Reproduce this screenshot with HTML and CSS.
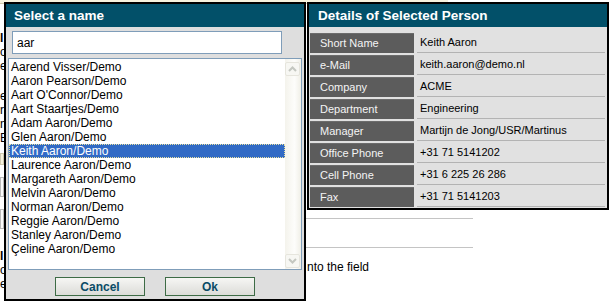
FILE: index.html
```html
<!DOCTYPE html>
<html lang="en">
<head>
    <meta charset="UTF-8">
    <title>Select a name</title>
    <link rel="stylesheet" href="styles.css">
</head>
<body>

    <div class="page">

        <!-- page behind the dialogs -->
        <div class="backdrop">
            <div class="strip"></div>
            <div class="backdrop-body">
                <div class="edge">
                    <p class="bold">l</p>
                    <p>o</p>
                    <p>e</p>
                    <p class="spacer">e</p>
                    <p>r</p>
                    <p>n</p>
                    <p>E</p>
                    <p class="box-beige"></p>
                    <p class="box-gray"></p>
                    <p class="box-gray"></p>
                    <p class="bold late">l</p>
                    <p>o</p>
                    <p>e</p>
                </div>
                <div class="notes">
                    <div class="rule first"></div>
                    <div class="rule"></div>
                    <p class="hint">nto the field</p>
                </div>
            </div>
        </div>

        <!-- name picker -->
        <div class="dialog picker">
            <div class="dialog-title">Select a name</div>
            <div class="picker-body">
                <input class="search" type="text" value="aar">
                <div class="listbox">
                    <ul class="names">
                        <li>Aarend Visser/Demo</li>
                        <li>Aaron Pearson/Demo</li>
                        <li>Aart O'Connor/Demo</li>
                        <li>Aart Staartjes/Demo</li>
                        <li>Adam Aaron/Demo</li>
                        <li>Glen Aaron/Demo</li>
                        <li class="selected">Keith Aaron/Demo</li>
                        <li>Laurence Aaron/Demo</li>
                        <li>Margareth Aaron/Demo</li>
                        <li>Melvin Aaron/Demo</li>
                        <li>Norman Aaron/Demo</li>
                        <li>Reggie Aaron/Demo</li>
                        <li>Stanley Aaron/Demo</li>
                        <li>Çeline Aaron/Demo</li>
                    </ul>
                    <div class="scrollbar">
                        <span class="scroll-btn">
                            <svg width="9" height="6" viewBox="0 0 9 6"><path d="M1 5 L4.5 1.5 L8 5" fill="none" stroke="#c4c7c0" stroke-width="2"/></svg>
                        </span>
                        <span class="scroll-btn">
                            <svg width="9" height="6" viewBox="0 0 9 6"><path d="M1 1 L4.5 4.5 L8 1" fill="none" stroke="#c4c7c0" stroke-width="2"/></svg>
                        </span>
                    </div>
                </div>
                <div class="buttons">
                    <button class="btn">Cancel</button>
                    <button class="btn">Ok</button>
                </div>
            </div>
        </div>

        <!-- details of the selected person -->
        <div class="dialog details">
            <div class="dialog-title">Details of Selected Person</div>
            <div class="details-body">
                <div class="label">Short Name</div><div class="value">Keith Aaron</div>
                <div class="label">e-Mail</div><div class="value">keith.aaron@demo.nl</div>
                <div class="label">Company</div><div class="value">ACME</div>
                <div class="label">Department</div><div class="value">Engineering</div>
                <div class="label">Manager</div><div class="value">Martijn de Jong/USR/Martinus</div>
                <div class="label">Office Phone</div><div class="value">+31 71 5141202</div>
                <div class="label">Cell Phone</div><div class="value">+31 6 225 26 286</div>
                <div class="label">Fax</div><div class="value">+31 71 5141203</div>
            </div>
        </div>

    </div>

</body>
</html>
```

FILE: styles.css
```css
body {
    margin: 0;
    background: #fff;
    font-family: "Liberation Sans", Arial, sans-serif;
    color: #000;
}

.page {
    position: relative;
    width: 609px;
    height: 301px;
    overflow: hidden;
}

/* ---------- page behind ---------- */

.strip {
    width: 448px;
    height: 3px;
    background: #f6f2de;
    border-bottom: 1px solid #cfc9ae;
}

.backdrop-body {
    display: flex;
}

.edge {
    width: 4px;
    padding-top: 27px;
    font-size: 12px;
}

.edge p {
    margin: 0;
    height: 14px;
    line-height: 14px;
    white-space: nowrap;
}

.edge .bold {
    font-weight: bold;
}

.edge .spacer {
    margin-top: 16px;
}

.edge .box-beige {
    margin-top: 8px;
    height: 10px;
    background: #f6f2de;
    border: 1px solid #cfc9ae;
}

.edge .box-gray {
    margin-top: 12px;
    height: 18px;
    border: 1px solid #b9b9b9;
    background: #fafafa;
}

.edge .late {
    margin-top: 20px;
}

.notes {
    margin-left: 302px;
    padding-top: 214px;
    width: 167px;
}

.rule {
    height: 1px;
    background: #c4c4c4;
    margin-bottom: 28px;
}

.hint {
    margin: -16px 0 0 1px;
    font-size: 12px;
    white-space: nowrap;
}

/* ---------- dialogs ---------- */

.dialog {
    position: absolute;
    top: 2px;
    box-sizing: border-box;
    width: 302px;
    border: 2px solid #000;
    background: #dedede;
}

.picker {
    left: 4px;
    height: 299px;
}

.details {
    left: 307px;
    background: #e1e1e1;
}

.dialog-title {
    height: 23px;
    line-height: 23px;
    background: #025069;
    color: #fff;
    font-weight: bold;
    font-size: 13.5px;
    padding-left: 8px;
}

.details .dialog-title {
    padding-left: 9px;
}

/* ---------- picker ---------- */

.picker-body {
    padding: 4px 0 0 2px;
}

.search {
    display: block;
    box-sizing: border-box;
    margin-left: 4px;
    width: 270px;
    height: 23px;
    border: 1px solid #7f9db9;
    padding: 0 4px;
    font-family: "Liberation Sans", Arial, sans-serif;
    font-size: 12px;
    background: #fff;
    outline: none;
}

.listbox {
    display: flex;
    box-sizing: border-box;
    margin-top: 4px;
    width: 294px;
    height: 212px;
    border: 1px solid #7f9db9;
    background: #fff;
}

.names {
    flex: 1;
    list-style: none;
    margin: 0;
    padding: 1px 0 0 0;
    font-size: 12px;
}

.names li {
    height: 14px;
    line-height: 14px;
    padding-left: 2px;
    white-space: nowrap;
}

.names .selected {
    background: #316ac5;
    color: #fff;
    outline: 1px dotted #e8e0a0;
    outline-offset: -1px;
}

.scrollbar {
    width: 16px;
    display: flex;
    flex-direction: column;
    justify-content: space-between;
    padding: 3px 0 1px 0;
    background: linear-gradient(to right, #f4f3ec, #fdfdfb 60%, #f0efe7);
}

.scroll-btn {
    display: flex;
    align-items: center;
    justify-content: center;
    box-sizing: border-box;
    width: 15px;
    height: 14px;
    border: 1px solid #e6e5dd;
    border-radius: 2px;
    background: #f7f7f3;
}

.buttons {
    display: flex;
    justify-content: center;
    gap: 20px;
    margin-top: 7px;
    padding-right: 2px;
}

.btn {
    box-sizing: border-box;
    width: 90px;
    height: 19px;
    border: 1px solid #3d6b45;
    background: linear-gradient(#f6f6f4, #dcdcd8);
    color: #0b4b66;
    font-family: "Liberation Sans", Arial, sans-serif;
    font-weight: bold;
    font-size: 12px;
    padding: 0;
}

/* ---------- details ---------- */

.details-body {
    display: grid;
    grid-template-columns: 104px 188px;
    column-gap: 3px;
    row-gap: 2px;
    padding: 6px 2px 1px 1px;
    font-size: 11px;
}

.label {
    height: 20px;
    line-height: 18px;
    background: #5c5c5c;
    color: #f4f4f4;
    padding-left: 10px;
    border-top: 1px solid #6c6c6c;
    box-sizing: border-box;
}

.value {
    height: 20px;
    line-height: 19px;
    box-sizing: border-box;
    padding-left: 3px;
    border-bottom: 1px solid #b3b3b3;
    white-space: nowrap;
}
```
